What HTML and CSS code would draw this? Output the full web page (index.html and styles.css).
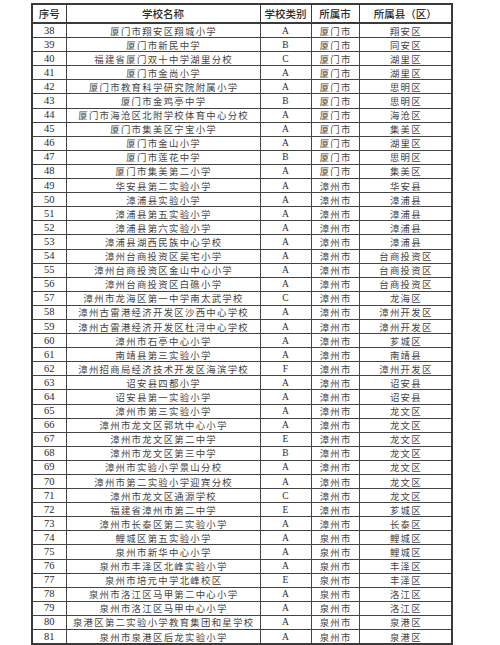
FILE: index.html
```html
<!DOCTYPE html>
<html lang="zh-CN">
<head>
<meta charset="utf-8">
<link rel="stylesheet" href="styles.css">
</head>
<body>
<table class="list">
<colgroup>
<col class="c-no"><col class="c-name"><col class="c-type"><col class="c-city"><col class="c-county">
</colgroup>
<thead>
<tr><th>序号</th><th>学校名称</th><th>学校类别</th><th>所属市</th><th>所属县（区）</th></tr>
</thead>
<tbody>
<tr><td class="no">38</td><td class="zh">厦门市翔安区翔城小学</td><td class="ty">A</td><td class="zh">厦门市</td><td class="zh">翔安区</td></tr>
<tr><td class="no">39</td><td class="zh">厦门市新民中学</td><td class="ty">B</td><td class="zh">厦门市</td><td class="zh">同安区</td></tr>
<tr><td class="no">40</td><td class="zh">福建省厦门双十中学湖里分校</td><td class="ty">C</td><td class="zh">厦门市</td><td class="zh">湖里区</td></tr>
<tr><td class="no">41</td><td class="zh">厦门市金尚小学</td><td class="ty">A</td><td class="zh">厦门市</td><td class="zh">湖里区</td></tr>
<tr><td class="no">42</td><td class="zh">厦门市教育科学研究院附属小学</td><td class="ty">A</td><td class="zh">厦门市</td><td class="zh">思明区</td></tr>
<tr><td class="no">43</td><td class="zh">厦门市金鸡亭中学</td><td class="ty">B</td><td class="zh">厦门市</td><td class="zh">思明区</td></tr>
<tr><td class="no">44</td><td class="zh">厦门市海沧区北附学校体育中心分校</td><td class="ty">A</td><td class="zh">厦门市</td><td class="zh">海沧区</td></tr>
<tr><td class="no">45</td><td class="zh">厦门市集美区宁宝小学</td><td class="ty">A</td><td class="zh">厦门市</td><td class="zh">集美区</td></tr>
<tr><td class="no">46</td><td class="zh">厦门市金山小学</td><td class="ty">A</td><td class="zh">厦门市</td><td class="zh">湖里区</td></tr>
<tr><td class="no">47</td><td class="zh">厦门市莲花中学</td><td class="ty">B</td><td class="zh">厦门市</td><td class="zh">思明区</td></tr>
<tr><td class="no">48</td><td class="zh">厦门市集美第二小学</td><td class="ty">A</td><td class="zh">厦门市</td><td class="zh">集美区</td></tr>
<tr><td class="no">49</td><td class="zh">华安县第二实验小学</td><td class="ty">A</td><td class="zh">漳州市</td><td class="zh">华安县</td></tr>
<tr><td class="no">50</td><td class="zh">漳浦县实验小学</td><td class="ty">A</td><td class="zh">漳州市</td><td class="zh">漳浦县</td></tr>
<tr><td class="no">51</td><td class="zh">漳浦县第五实验小学</td><td class="ty">A</td><td class="zh">漳州市</td><td class="zh">漳浦县</td></tr>
<tr><td class="no">52</td><td class="zh">漳浦县第六实验小学</td><td class="ty">A</td><td class="zh">漳州市</td><td class="zh">漳浦县</td></tr>
<tr><td class="no">53</td><td class="zh">漳浦县湖西民族中心学校</td><td class="ty">A</td><td class="zh">漳州市</td><td class="zh">漳浦县</td></tr>
<tr><td class="no">54</td><td class="zh">漳州台商投资区吴宅小学</td><td class="ty">A</td><td class="zh">漳州市</td><td class="zh">台商投资区</td></tr>
<tr><td class="no">55</td><td class="zh">漳州台商投资区金山中心小学</td><td class="ty">A</td><td class="zh">漳州市</td><td class="zh">台商投资区</td></tr>
<tr><td class="no">56</td><td class="zh">漳州台商投资区白礁小学</td><td class="ty">A</td><td class="zh">漳州市</td><td class="zh">台商投资区</td></tr>
<tr><td class="no">57</td><td class="zh">漳州市龙海区第一中学南太武学校</td><td class="ty">C</td><td class="zh">漳州市</td><td class="zh">龙海区</td></tr>
<tr><td class="no">58</td><td class="zh">漳州古雷港经济开发区沙西中心学校</td><td class="ty">A</td><td class="zh">漳州市</td><td class="zh">漳州开发区</td></tr>
<tr><td class="no">59</td><td class="zh">漳州古雷港经济开发区杜浔中心学校</td><td class="ty">A</td><td class="zh">漳州市</td><td class="zh">漳州开发区</td></tr>
<tr><td class="no">60</td><td class="zh">漳州市石亭中心小学</td><td class="ty">A</td><td class="zh">漳州市</td><td class="zh">芗城区</td></tr>
<tr><td class="no">61</td><td class="zh">南靖县第三实验小学</td><td class="ty">A</td><td class="zh">漳州市</td><td class="zh">南靖县</td></tr>
<tr><td class="no">62</td><td class="zh">漳州招商局经济技术开发区海滨学校</td><td class="ty">F</td><td class="zh">漳州市</td><td class="zh">漳州开发区</td></tr>
<tr><td class="no">63</td><td class="zh">诏安县四都小学</td><td class="ty">A</td><td class="zh">漳州市</td><td class="zh">诏安县</td></tr>
<tr><td class="no">64</td><td class="zh">诏安县第一实验小学</td><td class="ty">A</td><td class="zh">漳州市</td><td class="zh">诏安县</td></tr>
<tr><td class="no">65</td><td class="zh">漳州市第三实验小学</td><td class="ty">A</td><td class="zh">漳州市</td><td class="zh">龙文区</td></tr>
<tr><td class="no">66</td><td class="zh">漳州市龙文区郭坑中心小学</td><td class="ty">A</td><td class="zh">漳州市</td><td class="zh">龙文区</td></tr>
<tr><td class="no">67</td><td class="zh">漳州市龙文区第二中学</td><td class="ty">E</td><td class="zh">漳州市</td><td class="zh">龙文区</td></tr>
<tr><td class="no">68</td><td class="zh">漳州市龙文区第三中学</td><td class="ty">B</td><td class="zh">漳州市</td><td class="zh">龙文区</td></tr>
<tr><td class="no">69</td><td class="zh">漳州市实验小学景山分校</td><td class="ty">A</td><td class="zh">漳州市</td><td class="zh">龙文区</td></tr>
<tr><td class="no">70</td><td class="zh">漳州市第二实验小学迎宾分校</td><td class="ty">A</td><td class="zh">漳州市</td><td class="zh">龙文区</td></tr>
<tr><td class="no">71</td><td class="zh">漳州市龙文区通源学校</td><td class="ty">C</td><td class="zh">漳州市</td><td class="zh">龙文区</td></tr>
<tr><td class="no">72</td><td class="zh">福建省漳州市第二中学</td><td class="ty">E</td><td class="zh">漳州市</td><td class="zh">芗城区</td></tr>
<tr><td class="no">73</td><td class="zh">漳州市长泰区第二实验小学</td><td class="ty">A</td><td class="zh">漳州市</td><td class="zh">长泰区</td></tr>
<tr><td class="no">74</td><td class="zh">鲤城区第五实验小学</td><td class="ty">A</td><td class="zh">泉州市</td><td class="zh">鲤城区</td></tr>
<tr><td class="no">75</td><td class="zh">泉州市新华中心小学</td><td class="ty">A</td><td class="zh">泉州市</td><td class="zh">鲤城区</td></tr>
<tr><td class="no">76</td><td class="zh">泉州市丰泽区北峰实验小学</td><td class="ty">A</td><td class="zh">泉州市</td><td class="zh">丰泽区</td></tr>
<tr><td class="no">77</td><td class="zh">泉州市培元中学北峰校区</td><td class="ty">E</td><td class="zh">泉州市</td><td class="zh">丰泽区</td></tr>
<tr><td class="no">78</td><td class="zh">泉州市洛江区马甲第二中心小学</td><td class="ty">A</td><td class="zh">泉州市</td><td class="zh">洛江区</td></tr>
<tr><td class="no">79</td><td class="zh">泉州市洛江区马甲中心小学</td><td class="ty">A</td><td class="zh">泉州市</td><td class="zh">洛江区</td></tr>
<tr><td class="no">80</td><td class="zh">泉港区第二实验小学教育集团和星学校</td><td class="ty">A</td><td class="zh">泉州市</td><td class="zh">泉港区</td></tr>
<tr><td class="no">81</td><td class="zh">泉州市泉港区后龙实验小学</td><td class="ty">A</td><td class="zh">泉州市</td><td class="zh">泉港区</td></tr>
</tbody>
</table>
</body>
</html>
```
FILE: styles.css
```css
html, body {
  margin: 0;
  padding: 0;
  background: #ffffff;
}
body {
  padding: 3px 0 0 31px;
}
.list {
  border-collapse: collapse;
  table-layout: fixed;
  width: 420px;
  border: 2px solid #3a3a3a;
  color: #2a2a2a;
}
.c-no { width: 34px; }
.c-name { width: 194px; }
.c-type { width: 51px; }
.c-city { width: 48px; }
.c-county { width: 93px; }
.list th {
  height: 17px;
  padding: 0;
  font-family: "Noto Sans CJK SC", sans-serif;
  font-size: 10.5px;
  font-weight: 500;
  line-height: 14px;
  color: #2b2b2b;
  border: 1px solid #3a3a3a;
  border-bottom-width: 2px;
  text-align: center;
  white-space: nowrap;
  overflow: hidden;
}
.list td {
  height: 13.1px;
  padding: 0;
  border: 1px solid #444444;
  text-align: center;
  white-space: nowrap;
  overflow: hidden;
  line-height: 12px;
}
.list td.no {
  font-family: "Liberation Serif", serif;
  font-size: 10.5px;
}
.list td.ty {
  font-family: "Liberation Serif", serif;
  font-size: 9.5px;
}
.list td.zh {
  font-family: "Noto Sans CJK SC", sans-serif;
  font-size: 9.4px;
  font-weight: 400;
  letter-spacing: 1.3px;
  text-indent: 1.3px;
  color: #444444;
}
```
